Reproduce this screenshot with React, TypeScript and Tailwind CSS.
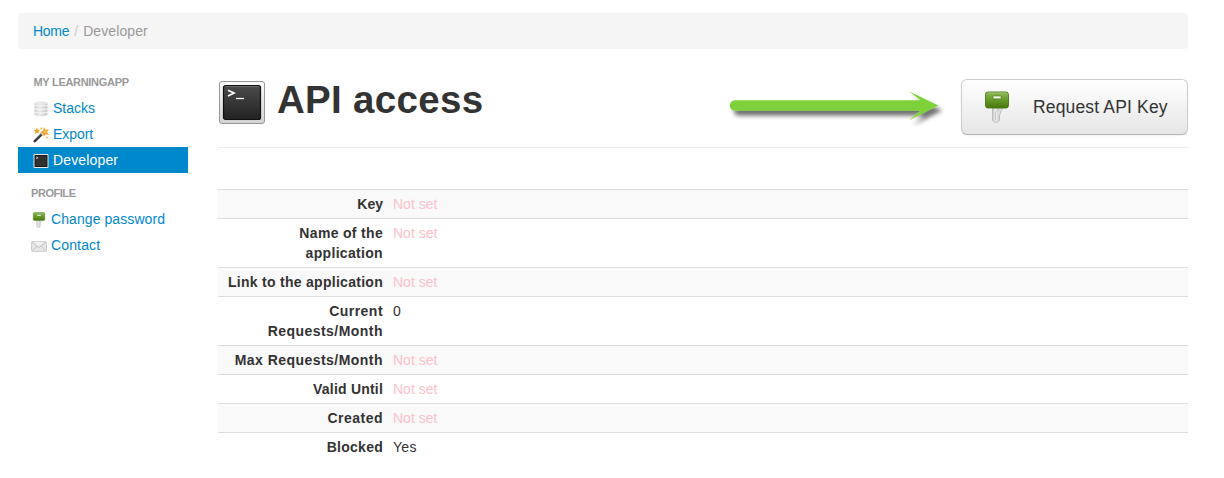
import React from "react";

function StacksIcon() {
  return (
    <svg width="16" height="16" viewBox="0 0 16 16">
      <defs>
        <linearGradient id="stack" x1="0" x2="1" y1="0" y2="0">
          <stop offset="0" stopColor="#cfcfcf" />
          <stop offset=".4" stopColor="#ececec" />
          <stop offset="1" stopColor="#c8c8c8" />
        </linearGradient>
      </defs>
      <path d="M1.500 2Q8 -.8 14.500 2V14Q8 16.800 1.500 14Z" fill="url(#stack)" />
      <ellipse cx="8" cy="2.300" rx="6" ry="1.200" fill="#e9e9e9" />
      <path d="M1.500 4.500Q8 5.500 14.500 4.500M1.500 8Q8 9 14.500 8M1.500 11.500Q8 12.500 14.500 11.500" stroke="#fafafa" strokeWidth=".8" fill="none" />
    </svg>
  );
}

function WandIcon() {
  return (
    <svg width="16" height="16" viewBox="0 0 16 16">
      <path d="M1.800 14.200 9.800 6.200" stroke="#333" strokeWidth="2.600" strokeLinecap="round" />
      <path d="M2 13.200 9 6.200" stroke="#777" strokeWidth=".6" />
      <path d="M8.500 7.500 10.500 5.500" stroke="#ccc" strokeWidth="2.600" />
      <path d="m11.300 0 1.100 2.700 3.400-.2-1.900 2.500 1.800 2.700-3.100-.5-1.800 2.500-.6-3.100-2.900-1.200 2.700-1.600Z" fill="#f39c24" />
      <path d="m3.900.7 1 2 2.200.3-1.600 1.500.4 2.200-2-1-2 1 .4-2.200L.7 3l2.200-.3Z" fill="#f5a42c" />
      <circle cx="8.300" cy="1.400" r="1" fill="#f7ad40" />
      <circle cx="14" cy="10.500" r=".9" fill="#f7b14d" />
      <circle cx="12" cy="4.800" r="1.300" fill="#ffcf62" />
    </svg>
  );
}

function SmallTerminalIcon() {
  return (
    <svg width="16" height="16" viewBox="0 0 16 16">
      <rect x=".5" y="1" width="15" height="14" rx="1" fill="#e8e8e8" />
      <rect x="1.500" y="2" width="13" height="12" rx=".5" fill="#191919" />
      <rect x="2.500" y="3" width="11" height="10" fill="#303030" />
      <path d="m3.300 4 1.500.8-1.500.8" stroke="#fff" strokeWidth=".8" fill="none" />
    </svg>
  );
}

function TerminalIcon() {
  return (
    <svg width="48" height="48" viewBox="0 0 48 48" className="shrink-0">
      <defs>
        <linearGradient id="termFrame" x1="0" x2="0" y1="0" y2="1">
          <stop offset="0" stopColor="#fafafa" />
          <stop offset="1" stopColor="#d4d4d4" />
        </linearGradient>
        <linearGradient id="termScreen" x1="0" x2="0" y1="0" y2="1">
          <stop offset="0" stopColor="#4b4b4b" />
          <stop offset="1" stopColor="#222" />
        </linearGradient>
      </defs>
      <rect x="1.500" y="2.500" width="45" height="42" rx="2.500" fill="url(#termFrame)" stroke="#969696" />
      <rect x="5.500" y="6.500" width="37" height="34" rx="2" fill="url(#termScreen)" stroke="#111" strokeWidth="1.200" />
      <path d="M7 7.500H41" stroke="#777" strokeWidth=".7" />
      <path d="m10 11.200 6 2.900-6 2.900" stroke="#fff" strokeWidth="1.700" fill="none" />
      <path d="M18 19.500H26" stroke="#f4f4f4" strokeWidth="1.300" />
    </svg>
  );
}

function KeyIcon({ size }: { size: number }) {
  return (
    <svg width={size} height={size} viewBox="0 0 32 32" className="shrink-0">
      <defs>
        <linearGradient id="keyHead" x1="0" x2="0" y1="0" y2="1">
          <stop offset="0" stopColor="#8fba5d" />
          <stop offset=".5" stopColor="#659b29" />
          <stop offset="1" stopColor="#47750c" />
        </linearGradient>
        <linearGradient id="keyBlade" x1="0" x2="1" y1="0" y2="0">
          <stop offset="0" stopColor="#c8c8c8" />
          <stop offset=".35" stopColor="#f5f5f5" />
          <stop offset=".6" stopColor="#d4d4d4" />
          <stop offset="1" stopColor="#ededed" />
        </linearGradient>
      </defs>
      <path d="M11.500 17H21v2l-1.500 2V22.500l-1 1.500V29.500l-2 1.700h-3L11.500 29Z" fill="url(#keyBlade)" stroke="#b2b2b2" strokeWidth=".8" />
      <path d="M14.500 29.500V21l3-3" stroke="#b0b0b0" strokeWidth=".7" fill="none" />
      <rect x="4.500" y="1" width="23" height="16" rx="2.500" fill="url(#keyHead)" stroke="#4b7a16" strokeWidth=".9" />
      <path d="M6.500 2H25.500" stroke="#9fc872" strokeWidth=".8" />
      <rect x="12" y="5" width="8" height="2.800" rx=".4" fill="#f6f8f2" stroke="#47750f" strokeWidth=".6" />
    </svg>
  );
}

function EnvelopeIcon() {
  return (
    <svg width="16" height="16" viewBox="0 0 16 16">
      <rect x=".5" y="3.500" width="15" height="10" rx="1" fill="#e5e5e5" stroke="#d0d0d0" />
      <path d="m1 13 5-5M15 13l-5-5" stroke="#c4c4c4" strokeWidth=".8" />
      <path d="m1 4 7 5.500L15 4" stroke="#bcbcbc" fill="#efefef" strokeWidth=".9" />
    </svg>
  );
}

function Arrow() {
  return (
    <svg width="224" height="48" viewBox="0 0 224 48" className="shrink-0">
      <defs>
        <filter id="arrowShadow" x="-5%" y="-30%" width="112%" height="180%">
          <feDropShadow dx="4" dy="5" stdDeviation="2" floodColor="#000" floodOpacity=".55" />
        </filter>
      </defs>
      <path
        d="M10 15.300H195.500L184 6.200 213.300 20.500 184 35.300 195.500 25.700H10A5.200 5.200 0 0 1 10 15.300Z"
        fill="#7fd13b"
        filter="url(#arrowShadow)"
      />
    </svg>
  );
}

function NavItem({ icon, label, active = false, inset, spacing = "tracking-[0.08px]" }: { icon: React.ReactNode; label: string; active?: boolean; inset: string; spacing?: string }) {
  return (
    <a href="#" className={`flex h-[26px] items-center gap-1 text-sm leading-5 ${spacing} ${inset} ${active ? "bg-[#0088cc] text-white" : "text-[#0088cc]"}`}>
      <span className="mt-0.5 shrink-0">{icon}</span>
      <span>{label}</span>
    </a>
  );
}

const rows = [
  { label: "Key", value: "", spacing: "tracking-[0px]" },
  { label: "Name of the application", value: "", spacing: "tracking-[0.32px]" },
  { label: "Link to the application", value: "", spacing: "tracking-[0.28px]" },
  { label: "Current Requests/Month", value: "0", spacing: "tracking-[0.46px]" },
  { label: "Max Requests/Month", value: "", spacing: "tracking-[0.46px]" },
  { label: "Valid Until", value: "", spacing: "tracking-[0.2px]" },
  { label: "Created", value: "", spacing: "tracking-[0.48px]" },
  { label: "Blocked", value: "Yes", spacing: "tracking-[0.26px]" },
];

export default function App() {
  return (
    <div className="h-[478px] overflow-hidden bg-white pt-[13px] pr-9 pl-[18px] font-['Liberation_Sans',Arial,sans-serif] text-sm leading-5 text-[#333]">
      <nav className="flex h-9 items-center rounded bg-[#f5f5f5] px-[15px]">
        <a href="#" className="tracking-[-0.28px] text-[#0088cc]">Home</a>
        <span className="px-[5px] text-[#ccc]">/</span>
        <span className="tracking-[0.1px] text-[#999]">Developer</span>
      </nav>

      <div className="flex gap-[30px]">
        <aside className="w-[170px] shrink-0 pt-[23px]">
          <h2 className="mb-[3px] pl-[15.5px] text-[11px] font-bold leading-5 tracking-[-0.3px] text-[#999]">MY LEARNINGAPP</h2>
          <NavItem inset="pl-[15px]" icon={<StacksIcon />} label="Stacks" spacing="tracking-[0px]" />
          <NavItem inset="pl-[15px]" icon={<WandIcon />} label="Export" spacing="tracking-[-0.05px]" />
          <NavItem inset="pl-[15px]" icon={<SmallTerminalIcon />} label="Developer" spacing="tracking-[0.15px]" active />
          <h2 className="mt-[10px] mb-[3px] pl-[13px] text-[11px] font-bold leading-5 tracking-[-0.45px] text-[#999]">PROFILE</h2>
          <NavItem inset="pl-[13px]" icon={<KeyIcon size={16} />} label="Change password" />
          <NavItem inset="pl-[13px]" icon={<EnvelopeIcon />} label="Contact" spacing="tracking-[0.14px]" />
        </aside>

        <main className="min-w-0 flex-1 pt-[30px]">
          <header className="flex h-[69px] items-start border-b border-[#eee]">
            <TerminalIcon />
            <h1 className="mt-px ml-[11px] text-[38.5px] font-bold leading-10 tracking-[0.3px]">API access</h1>
            <div className="ml-auto mr-[12px] mt-[6px] flex h-12"><Arrow /></div>
            <button className="flex h-14 w-[227px] shrink-0 items-center rounded-md border border-[#ccc] border-b-[#b3b3b3] bg-linear-to-b from-white to-[#e6e6e6] pl-[19px] text-[17.5px] leading-5 tracking-[0.16px] text-[#333] shadow-[inset_0_1px_0_rgba(255,255,255,.2),0_1px_2px_rgba(0,0,0,.05)]">
              <KeyIcon size={32} />
              <span className="ml-[20px] whitespace-nowrap">Request API Key</span>
            </button>
          </header>

          <dl className="mt-[41px]">
            {rows.map(({ label, value, spacing }) => (
              <div key={label} className="flex gap-[10px] border-t border-[#ddd] py-1 odd:bg-[#f9f9f9]">
                <dt className={`w-[165px] shrink-0 text-right font-bold ${spacing}`}>{label}</dt>
                <dd className={value === "Yes" ? "tracking-[0.3px]" : value ? "" : "text-[#ffc0cb]"}>{value || "Not set"}</dd>
              </div>
            ))}
          </dl>
        </main>
      </div>
    </div>
  );
}
